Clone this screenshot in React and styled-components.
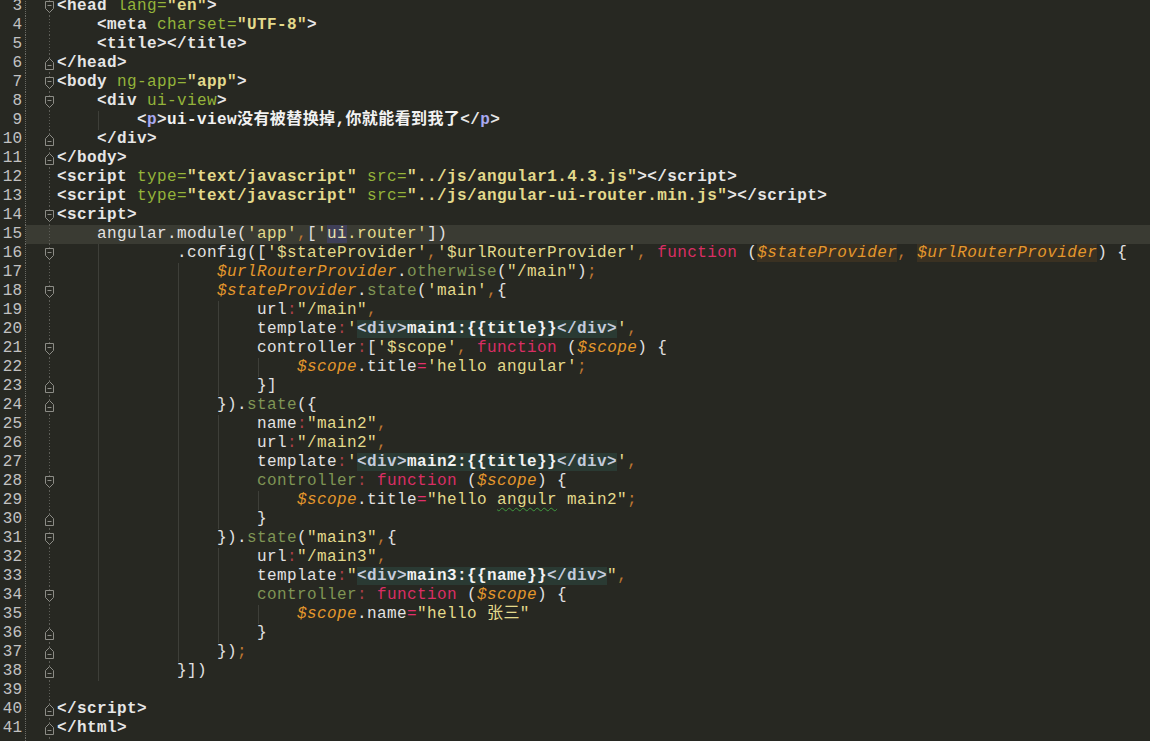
import React from 'react';
import styled, { createGlobalStyle, css } from 'styled-components';

const color = {
  bg: '#272822',
  current: '#3a3b33',
  guide: '#3e3f39',
  gutterDots: '#6a6a64',
  foldDots: '#5e5e58',
  marker: '#8c8c86',
  number: '#c2c2c2',
};

const GlobalStyle = createGlobalStyle`
  html, body {
    margin: 0;
    padding: 0;
    background: ${color.bg};
    overflow: hidden;
  }
`;

const tokenCss = {
  tag: css`color: #e6e6e6; font-weight: bold;`,
  ptag: css`color: #a8a8f0; font-weight: bold;`,
  attr: css`color: #94b43a;`,
  aval: css`color: #e4da8c; font-weight: bold;`,
  text: css`color: #f2f2f2; font-weight: bold;`,
  plain: css`color: #e2e2e2;`,
  str: css`color: #e4da8c;`,
  punct: css`color: #bd7631;`,
  colon: css`color: #aa3f48;`,
  op: css`color: #e2306a;`,
  kw: css`color: #d92e64;`,
  param: css`color: #e4972c; font-style: italic;`,
  paramHl: css`color: #e4972c; font-style: italic; background: #3a3122;`,
  method: css`color: #7f9555;`,
  hdiv: css`color: #c4cbdb; font-weight: bold; background: #2a3a33;`,
  htext: css`color: #f2f2f2; font-weight: bold; background: #2a3a33;`,
  hl: css`color: #e8e2b0; background: #3f3f58;`,
  typo: css`
    color: #e4da8c;
    text-decoration: underline wavy #3f9a3f;
    text-underline-offset: 3px;
    text-decoration-thickness: 1px;
  `,
};

const Editor = styled.div`
  display: flex;
  flex-direction: column;
  margin-top: -3px;
  min-height: 760px;
  background: ${color.bg};
  font-family: "Liberation Mono", "Noto Sans CJK SC", monospace;
  font-size: 16px;
  letter-spacing: 0.4px;
`;

const Line = styled.div`
  display: flex;
  height: 19px;
  line-height: 19px;
  background: ${({ $current }) => ($current ? color.current : 'transparent')};
`;

const Num = styled.div`
  box-sizing: border-box;
  width: 26px;
  flex: none;
  padding-right: 3px;
  text-align: right;
  color: ${color.number};
  background: ${color.bg};
  border-right: 1px dotted ${color.gutterDots};
  letter-spacing: 0;
`;

const Fold = styled.div`
  box-sizing: border-box;
  width: 31px;
  flex: none;
  display: flex;
  align-items: center;
  padding-left: 19px;
  background-image: repeating-linear-gradient(
    to bottom,
    ${color.foldDots} 0 1px,
    transparent 1px 3px
  );
  background-size: 1px 100%;
  background-position: 23px 0;
  background-repeat: no-repeat;
`;

const Code = styled.div`
  flex: 1;
  white-space: pre;
`;

const Indent = styled.span`
  display: inline-block;
  width: 10px;
  height: 19px;
  vertical-align: top;
  ${({ $guide }) =>
    $guide &&
    css`
      background: linear-gradient(
        to right,
        transparent 1px,
        ${color.guide} 1px,
        ${color.guide} 2px,
        transparent 2px
      );
    `}
`;

const Tok = styled.span`
  ${({ $t }) => tokenCss[$t]}
`;

const Marker = ({ kind }) => (
  <svg width="9" height="12" viewBox="0 0 9 12">
    {kind === 'start' ? (
      <>
        <path d="M0.5 0.5H8.5V7.5L4.5 11.5L0.5 7.5Z" fill={color.bg} stroke={color.marker} />
        <path d="M2.5 4.5H6.5" stroke={color.marker} />
      </>
    ) : (
      <>
        <path d="M0.5 11.5H8.5V4.5L4.5 0.5L0.5 4.5Z" fill={color.bg} stroke={color.marker} />
        <path d="M2.5 7.5H6.5" stroke={color.marker} />
      </>
    )}
  </svg>
);

const G1 = [4];
const G2 = [4, 12];
const G3 = [4, 12, 16];
const G4 = [4, 12, 16, 20];

const lines = [
  { n: 3, fold: 'start', toks: [['<head', 'tag'], [' '], ['lang=', 'attr'], ['"en"', 'aval'], ['>', 'tag']] },
  { n: 4, indent: 4, toks: [['<meta', 'tag'], [' '], ['charset=', 'attr'], ['"UTF-8"', 'aval'], ['>', 'tag']] },
  { n: 5, indent: 4, toks: [['<title></title>', 'tag']] },
  { n: 6, fold: 'end', toks: [['</head>', 'tag']] },
  { n: 7, fold: 'start', toks: [['<body', 'tag'], [' '], ['ng-app=', 'attr'], ['"app"', 'aval'], ['>', 'tag']] },
  { n: 8, fold: 'start', indent: 4, toks: [['<div', 'tag'], [' '], ['ui-view', 'attr'], ['>', 'tag']] },
  {
    n: 9, indent: 8, guides: G1,
    toks: [['<', 'tag'], ['p', 'ptag'], ['>', 'tag'], ['ui-view没有被替换掉,你就能看到我了', 'text'], ['</', 'tag'], ['p', 'ptag'], ['>', 'tag']],
  },
  { n: 10, fold: 'end', indent: 4, toks: [['</div>', 'tag']] },
  { n: 11, fold: 'end', toks: [['</body>', 'tag']] },
  {
    n: 12,
    toks: [['<script', 'tag'], [' '], ['type=', 'attr'], ['"text/javascript"', 'aval'], [' '], ['src=', 'attr'], ['"../js/angular1.4.3.js"', 'aval'], ['></script>', 'tag']],
  },
  {
    n: 13,
    toks: [['<script', 'tag'], [' '], ['type=', 'attr'], ['"text/javascript"', 'aval'], [' '], ['src=', 'attr'], ['"../js/angular-ui-router.min.js"', 'aval'], ['></script>', 'tag']],
  },
  { n: 14, fold: 'start', toks: [['<script>', 'tag']] },
  {
    n: 15, indent: 4, current: true,
    toks: [['angular.module('], ["'app'", 'str'], [',', 'punct'], ['['], ["'", 'str'], ['ui', 'hl'], [".router'", 'str'], ['])']],
  },
  {
    n: 16, fold: 'start', indent: 12, guides: G1,
    toks: [
      ['.config(['], ["'$stateProvider'", 'str'], [',', 'punct'], ["'$urlRouterProvider'", 'str'], [',', 'punct'], [' '],
      ['function', 'kw'], [' ('], ['$stateProvider', 'paramHl'], [',', 'punct'], [' '], ['$urlRouterProvider', 'paramHl'], [') {'],
    ],
  },
  {
    n: 17, indent: 16, guides: G2,
    toks: [['$urlRouterProvider', 'param'], ['.'], ['otherwise', 'method'], ['('], ['"/main"', 'str'], [')'], [';', 'punct']],
  },
  {
    n: 18, fold: 'start', indent: 16, guides: G2,
    toks: [['$stateProvider', 'param'], ['.'], ['state', 'method'], ['('], ["'main'", 'str'], [',', 'punct'], ['{']],
  },
  { n: 19, indent: 20, guides: G3, toks: [['url'], [':', 'colon'], ['"/main"', 'str'], [',', 'punct']] },
  {
    n: 20, indent: 20, guides: G3,
    toks: [['template'], [':', 'colon'], ["'", 'str'], ['<div>', 'hdiv'], ['main1:{{title}}', 'htext'], ['</div>', 'hdiv'], ["'", 'str'], [',', 'punct']],
  },
  {
    n: 21, fold: 'start', indent: 20, guides: G3,
    toks: [['controller'], [':', 'colon'], ['['], ["'$scope'", 'str'], [',', 'punct'], [' '], ['function', 'kw'], [' ('], ['$scope', 'param'], [') {']],
  },
  {
    n: 22, indent: 24, guides: G4,
    toks: [['$scope', 'param'], ['.title'], ['=', 'op'], ["'hello angular'", 'str'], [';', 'punct']],
  },
  { n: 23, fold: 'end', indent: 20, guides: G3, toks: [['}]']] },
  { n: 24, fold: 'end', indent: 16, guides: G2, toks: [['})'], ['.'], ['state', 'method'], ['({']] },
  { n: 25, indent: 20, guides: G3, toks: [['name'], [':', 'colon'], ['"main2"', 'str'], [',', 'punct']] },
  { n: 26, indent: 20, guides: G3, toks: [['url'], [':', 'colon'], ['"/main2"', 'str'], [',', 'punct']] },
  {
    n: 27, indent: 20, guides: G3,
    toks: [['template'], [':', 'colon'], ["'", 'str'], ['<div>', 'hdiv'], ['main2:{{title}}', 'htext'], ['</div>', 'hdiv'], ["'", 'str'], [',', 'punct']],
  },
  {
    n: 28, fold: 'start', indent: 20, guides: G3,
    toks: [['controller', 'method'], [':', 'colon'], [' '], ['function', 'kw'], [' ('], ['$scope', 'param'], [') {']],
  },
  {
    n: 29, indent: 24, guides: G4,
    toks: [['$scope', 'param'], ['.title'], ['=', 'op'], ['"hello ', 'str'], ['angulr', 'typo'], [' main2"', 'str'], [';', 'punct']],
  },
  { n: 30, fold: 'end', indent: 20, guides: G3, toks: [['}']] },
  {
    n: 31, fold: 'start', indent: 16, guides: G2,
    toks: [['})'], ['.'], ['state', 'method'], ['('], ['"main3"', 'str'], [',', 'punct'], ['{']],
  },
  { n: 32, indent: 20, guides: G3, toks: [['url'], [':', 'colon'], ['"/main3"', 'str'], [',', 'punct']] },
  {
    n: 33, indent: 20, guides: G3,
    toks: [['template'], [':', 'colon'], ['"', 'str'], ['<div>', 'hdiv'], ['main3:{{name}}', 'htext'], ['</div>', 'hdiv'], ['"', 'str'], [',', 'punct']],
  },
  {
    n: 34, fold: 'start', indent: 20, guides: G3,
    toks: [['controller', 'method'], [':', 'colon'], [' '], ['function', 'kw'], [' ('], ['$scope', 'param'], [') {']],
  },
  { n: 35, indent: 24, guides: G4, toks: [['$scope', 'param'], ['.name'], ['=', 'op'], ['"hello 张三"', 'str']] },
  { n: 36, fold: 'end', indent: 20, guides: G3, toks: [['}']] },
  { n: 37, fold: 'end', indent: 16, guides: G2, toks: [['})'], [';', 'punct']] },
  { n: 38, fold: 'end', indent: 12, guides: G1, toks: [['}])']] },
  { n: 39, toks: [] },
  { n: 40, fold: 'end', toks: [['</script>', 'tag']] },
  { n: 41, fold: 'end', toks: [['</html>', 'tag']] },
  { n: '', toks: [] },
];

const CodeLine = ({ line }) => {
  const { n, fold, indent = 0, guides = [], toks, current } = line;
  return (
    <Line $current={current}>
      <Num>{n}</Num>
      <Fold>{fold && <Marker kind={fold} />}</Fold>
      <Code>
        {Array.from({ length: indent }, (_, i) => (
          <Indent key={i} $guide={guides.includes(i)} />
        ))}
        {toks.map(([text, type = 'plain'], i) => (
          <Tok key={i} $t={type}>
            {text}
          </Tok>
        ))}
      </Code>
    </Line>
  );
};

const App = () => (
  <>
    <GlobalStyle />
    <Editor>
      {lines.map((line, i) => (
        <CodeLine key={i} line={line} />
      ))}
    </Editor>
  </>
);

export default App;
